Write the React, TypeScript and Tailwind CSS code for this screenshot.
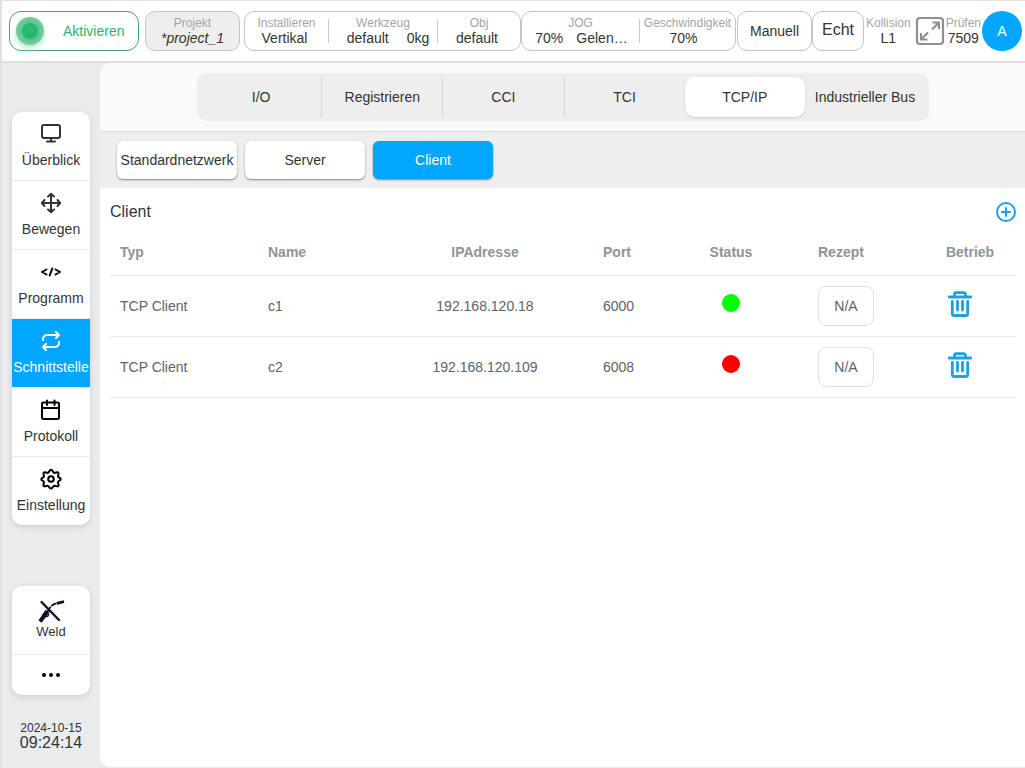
import { useState } from "react";
import type { ReactNode } from "react";
import clsx from "clsx";

const tabs = ["I/O", "Registrieren", "CCI", "TCI", "TCP/IP", "Industrieller Bus"];
const subTabs = ["Standardnetzwerk", "Server", "Client"];

const clients = [
  { type: "TCP Client", name: "c1", ip: "192.168.120.18", port: 6000, online: true },
  { type: "TCP Client", name: "c2", ip: "192.168.120.109", port: 6008, online: false },
];

function LineIcon({ children }: { children: ReactNode }) {
  return (
    <svg
      viewBox="0 0 24 24"
      className="size-6"
      fill="none"
      stroke="currentColor"
      strokeWidth="2"
      strokeLinecap="round"
      strokeLinejoin="round"
      aria-hidden="true"
    >
      {children}
    </svg>
  );
}

const navItems = [
  {
    label: "Überblick",
    icon: (
      <LineIcon>
        <rect x="3" y="3" width="18" height="13" rx="2" />
        <path d="M12 16v3M8 19.5h8" />
      </LineIcon>
    ),
  },
  {
    label: "Bewegen",
    icon: (
      <LineIcon>
        <path d="M12 3v18M3 12h18M9 5.5 12 2.8l3 2.7M9 18.5l3 2.7 3-2.7M5.5 9l-2.7 3 2.7 3M18.5 9l2.7 3-2.7 3" />
      </LineIcon>
    ),
  },
  {
    label: "Programm",
    icon: (
      <LineIcon>
        <g stroke="#000">
          <path d="M7.500 9.500 3 12l4.500 2.500M16.500 9.500 21 12l-4.500 2.500M13.300 8.500l-2.600 7" />
        </g>
      </LineIcon>
    ),
  },
  {
    label: "Schnittstelle",
    icon: (
      <LineIcon>
        <path d="M17 3l3 3-3 3M20 6H8a4 4 0 0 0-4 4v1M7 15l-3 3 3 3M4 18h12a4 4 0 0 0 4-4v-1" />
      </LineIcon>
    ),
  },
  {
    label: "Protokoll",
    icon: (
      <LineIcon>
        <g stroke="#000">
          <rect x="3" y="4.500" width="17" height="16.500" rx="1.500" />
          <path d="M3 10h17M8 2.500V7M15.500 2.500V7" />
        </g>
      </LineIcon>
    ),
  },
  {
    label: "Einstellung",
    icon: (
      <LineIcon>
        <g stroke="#000">
          <circle cx="12" cy="12" r="2.800" />
          <path d="M12 2.800c1.800 0 1.500 2.400 3 3s3-1.400 4.300-.2c1.200 1.300-.9 2.500-.2 4s2.600.9 2.600 2.600-2 1.200-2.600 2.600 1.400 3 .2 4.200-2.800-.8-4.300-.1-1.200 2.600-3 2.600-1.500-2-3-2.600-3 1.300-4.300.1.900-2.700.2-4.200-2.600-.8-2.600-2.600 2-1.100 2.600-2.600-1.400-2.700-.2-4 2.800.8 4.300.2 1.200-3 3-3z" />
        </g>
      </LineIcon>
    ),
  },
];

function WeldIcon() {
  return (
    <svg viewBox="0 0 28 26" className="h-[26px] w-7" fill="none" stroke="#10102a" aria-hidden="true">
      <path d="M4.500 4 22 22" strokeWidth="2.400" strokeLinecap="round" />
      <path d="M3 23.500 7.500 17.500" strokeWidth="4" />
      <path d="M6.500 18.500 10.500 13" strokeWidth="4.600" />
      <path d="M10.500 14C13 8.500 15.500 6 19.500 5.300" strokeWidth="1.800" strokeDasharray="6 1" />
      <path d="M9 18.500c2 .5 2.500-1 3-3" strokeWidth="1.200" />
      <path d="M19.800 5.300 27 3.600" strokeWidth="2.800" />
    </svg>
  );
}

function ExpandIcon() {
  return (
    <svg viewBox="0 0 30 30" className="size-[30px] text-[#8f8f8f]" fill="none" stroke="currentColor" strokeWidth="2.200" aria-hidden="true">
      <rect x="2" y="2" width="26" height="26" rx="3" />
      <path d="M17.500 6.500h6.500V13M23.500 7 17 13.500M12.500 23.500H6V17M6.500 23 13 16.500" />
    </svg>
  );
}

function TrashIcon() {
  return (
    <svg viewBox="0 0 26 28" className="h-7 w-[26px]" fill="none" stroke="currentColor" strokeWidth="2.800" strokeLinecap="round" strokeLinejoin="round" aria-hidden="true">
      <path d="M2.300 7h21.400M7.500 6V4.500A1.800 1.800 0 0 1 9.300 2.700h7.400A1.800 1.800 0 0 1 18.500 4.500V6M5.300 11.500v12a2 2 0 0 0 2 2h11.400a2 2 0 0 0 2-2v-12M10.500 11.500v8.500M15.500 11.500v8.500" />
    </svg>
  );
}

function Stat({ label, className, children }: { label: string; className?: string; children: ReactNode }) {
  return (
    <div className={clsx("flex flex-col items-center whitespace-nowrap", className)}>
      <span className="text-xs leading-4 text-[#a3a5a9]">{label}</span>
      <span className="flex pb-0.5 text-sm leading-[14px]">{children}</span>
    </div>
  );
}

function Divider() {
  return <div className="h-6 w-px shrink-0 bg-[#cccccc]" />;
}

function Header() {
  return (
    <header className="relative z-10 flex h-[62px] items-center border-b-2 border-[#dcdfde] bg-white pr-[3px] pl-[7px]">
      <button className="flex h-10 w-[130px] shrink-0 items-center rounded-xl border border-[#3da577] pl-1.5 text-sm text-[#2bb673]">
        <span className="flex size-7 items-center justify-center rounded-full bg-[#74cfa3] bg-radial from-[#2bb673] to-[#8ed8b4] shadow-[0_3px_6px_#b5e5cd]">
          <span className="size-4 rounded-full bg-[#2bb673]" />
        </span>
        <span className="ml-[19px]">Aktivieren</span>
      </button>
      <button className="ml-1.5 h-10 w-[95px] shrink-0 rounded-[10px] border border-[#c4c4c4] bg-[#eeeeee]">
        <Stat label="Projekt">
          <em>*project_1</em>
        </Stat>
      </button>
      <div className="ml-1 flex h-10 w-[277px] shrink-0 items-center rounded-[10px] border border-[#c4c4c4]">
        <Stat label="Installieren" className="w-[83px]">
          <span className="pr-1">Vertikal</span>
        </Stat>
        <Divider />
        <Stat label="Werkzeug" className="w-[108px]">
          <span className="pl-2.5">default</span>
          <span className="pl-[18px]">0kg</span>
        </Stat>
        <Divider />
        <Stat label="Obj" className="flex-1">
          <span className="pr-1">default</span>
        </Stat>
      </div>
      <div className="flex h-10 w-[215px] shrink-0 items-center rounded-[10px] border border-[#c4c4c4]">
        <Stat label="JOG" className="w-[117px]">
          <span className="pl-0.5">70%</span>
          <span className="pl-[13px]">Gelen…</span>
        </Stat>
        <Divider />
        <Stat label="Geschwindigkeit" className="flex-1">
          <span className="pr-2">70%</span>
        </Stat>
      </div>
      <button className="ml-px h-10 w-[75px] shrink-0 rounded-[10px] border border-[#c4c4c4] text-sm">Manuell</button>
      <button className="h-10 w-[52px] shrink-0 rounded-[10px] border border-[#c4c4c4] pb-0.5 text-base">Echt</button>
      <Stat label="Kollision" className="ml-0.5 shrink-0">L1</Stat>
      <button className="ml-auto shrink-0" aria-label="Vollbild">
        <ExpandIcon />
      </button>
      <Stat label="Prüfen" className="mx-px shrink-0">7509</Stat>
      <button className="size-10 shrink-0 rounded-full bg-[#00a6ff] text-sm text-white">A</button>
    </header>
  );
}

function Sidebar() {
  const [active, setActive] = useState("Schnittstelle");

  return (
    <aside className="flex w-[98px] shrink-0 flex-col px-2.5 pt-[49px]">
      <nav className="overflow-hidden rounded-[10px] bg-white shadow-[0_2px_6px_rgba(0,0,0,0.12)]">
        {navItems.map((item) => (
          <button
            key={item.label}
            onClick={() => setActive(item.label)}
            className={clsx(
              "flex h-[69px] w-full flex-col items-center border-b border-[#ebebeb] pt-2.5 text-sm whitespace-nowrap last:h-[68px] last:border-b-0",
              active === item.label ? "bg-[#00a6ff] text-white" : "text-[#333333]"
            )}
          >
            {item.icon}
            <span className="mt-1 leading-5">{item.label}</span>
          </button>
        ))}
      </nav>

      <div className="mt-[61px] rounded-[10px] bg-white shadow-[0_2px_6px_rgba(0,0,0,0.12)]">
        <button className="flex h-[69px] w-full flex-col items-center border-b border-[#ebebeb] pt-3 text-[13px] leading-4">
          <WeldIcon />
          Weld
        </button>
        <button className="flex h-10 w-full items-center justify-center gap-[3px]" aria-label="Mehr">
          <span className="size-1 rounded-full bg-black" />
          <span className="size-1 rounded-full bg-black" />
          <span className="size-1 rounded-full bg-black" />
        </button>
      </div>

      <div className="mt-[26px] text-center">
        <div className="text-xs leading-[14px]">2024-10-15</div>
        <div className="text-base leading-4">09:24:14</div>
      </div>
    </aside>
  );
}

function ClientTable() {
  return (
    <table className="w-full table-fixed border-collapse text-left text-sm">
      <thead className="text-[#909399]">
        <tr className="h-[46px] border-b border-[#ebebeb]">
          <th className="w-[148px] pl-2.5">Typ</th>
          <th className="w-[148px] pl-2.5">Name</th>
          <th className="text-center">IPAdresse</th>
          <th className="w-[112px] pl-[39px]">Port</th>
          <th className="w-[110px] text-center">Status</th>
          <th className="w-[138px] pl-8">Rezept</th>
          <th className="w-[92px] text-center">Betrieb</th>
        </tr>
      </thead>
      <tbody className="text-[#606266]">
        {clients.map((client) => (
          <tr key={client.name} className="h-[61px] border-b border-[#ebebeb]">
            <td className="pl-2.5">{client.type}</td>
            <td className="pl-2.5">{client.name}</td>
            <td className="text-center">{client.ip}</td>
            <td className="pl-[39px]">{client.port}</td>
            <td className="pb-1.5">
              <div className={clsx("mx-auto size-[18px] rounded-full", client.online ? "bg-[#00ff00]" : "bg-[#ff0000]")} />
            </td>
            <td className="pl-8">
              <button className="h-10 w-14 rounded-lg border border-[#dcdfe6]">N/A</button>
            </td>
            <td className="pr-5 pb-1">
              <button className="mx-auto block text-[#1ba1e6]" aria-label="Löschen">
                <TrashIcon />
              </button>
            </td>
          </tr>
        ))}
      </tbody>
    </table>
  );
}

export default function App() {
  const [tab, setTab] = useState("TCP/IP");
  const [subTab, setSubTab] = useState("Client");

  return (
    <div className="flex min-h-screen flex-col border-t border-l-2 border-[#dfe1e3] bg-[#e9ebed] font-['Liberation_Sans',Arial,sans-serif] text-[#333333]">
      <Header />
      <div className="flex flex-1">
        <Sidebar />
        <main className="mb-px min-w-0 flex-1 overflow-hidden rounded-l-[10px] bg-white">
          <div className="border-b border-[#dcdfde] bg-[#fafafa] pt-2.5 pr-24 pb-2.5 pl-[97px]">
            <nav className="flex h-12 items-center rounded-[10px] bg-[#eeeeee] px-1">
              {tabs.map((name, i) => (
                <button
                  key={name}
                  onClick={() => setTab(name)}
                  className={clsx(
                    "h-10 min-w-0 flex-1 text-sm whitespace-nowrap",
                    tab === name ? "rounded-[10px] bg-white shadow-sm" : i < 3 && "border-r border-[#d8d8d8]"
                  )}
                >
                  {name}
                </button>
              ))}
            </nav>
          </div>

          <div className="flex gap-2 bg-[#eeeeee] px-[17px] py-[9px]">
            {subTabs.map((name) => (
              <button
                key={name}
                onClick={() => setSubTab(name)}
                className={clsx(
                  "h-[38px] w-[120px] rounded-md text-sm shadow-[0_1px_2px_rgba(0,0,0,0.45)]",
                  subTab === name ? "bg-[#00a6ff] text-white" : "bg-white"
                )}
              >
                {name}
              </button>
            ))}
          </div>

          <section className="pr-[9px] pl-2.5">
            <div className="flex h-[41px] items-center justify-between pt-[7px]">
              <h2 className="text-base">Client</h2>
              <button className="text-[#1ba1e6]" aria-label="Hinzufügen">
                <svg viewBox="0 0 20 20" className="size-5" fill="none" stroke="currentColor" strokeWidth="2" strokeLinecap="round" aria-hidden="true">
                  <circle cx="10" cy="10" r="9" />
                  <path d="M10 6v8M6 10h8" />
                </svg>
              </button>
            </div>
            <ClientTable />
          </section>
        </main>
      </div>
    </div>
  );
}
